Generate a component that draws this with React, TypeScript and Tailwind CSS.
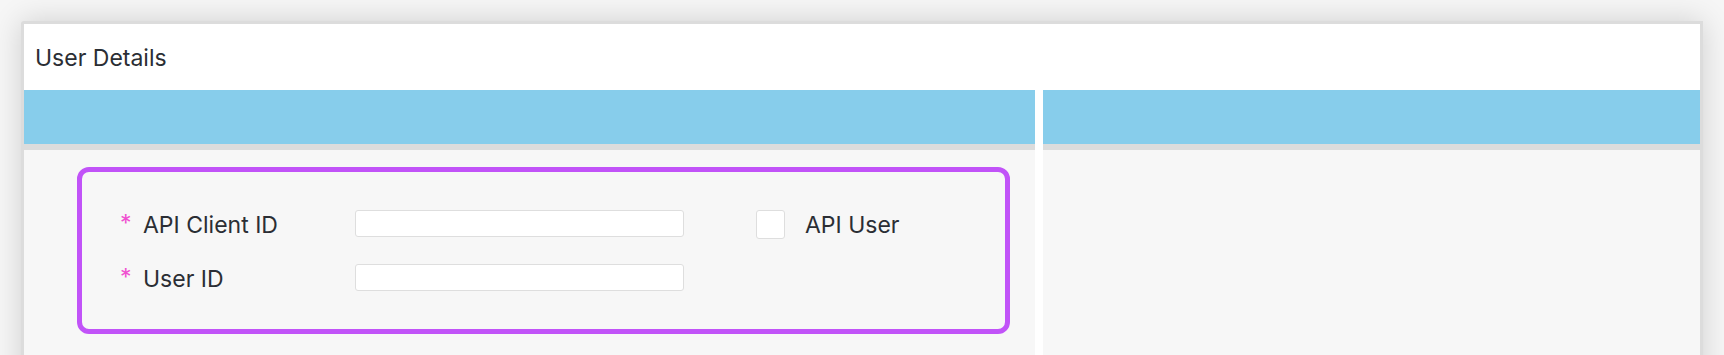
export default function App() {
  return (
    <div className="min-h-screen bg-[#f6f6f6] p-[21px] font-['Inter',sans-serif] text-[#2b2e34]">
      <div className="rounded-tl-[3px] border-[3px] border-[#dcdcdc] bg-white shadow-[0_0_30px_rgba(0,0,0,0.16)]">
        <div className="flex h-[66px] items-center px-[11px] pt-[3px] text-[23px] leading-[27px]">User Details</div>
        <div className="flex gap-2">
          <div className="w-[1011px]">
            <div className="h-[54px] bg-[#87cdeb]" />
            <div className="h-[6px] bg-[#dcdcdc]" />
            <div className="h-[300px] bg-[#f7f7f7] pl-[53px] pr-[25px] pt-[17px]">
              <div className="rounded-[12px] border-[5px] border-[#c153f8] px-[38px] py-[38px]">
                <div className="flex flex-col gap-[27px] text-[23px] leading-[27px]">
                  <div className="flex h-[27px] items-center">
                    <span className="w-[23px] self-start text-[#f050d0]">*</span>
                    <span className="mt-[4px] w-[212px]">API Client ID</span>
                    <input className="h-[27px] w-[329px] rounded-[3px] border border-[#dedede] bg-white" />
                    <span className="ml-[72px] mt-[2px] h-[29px] w-[29px] shrink-0 rounded-[3px] border border-[#dedede] bg-white" />
                    <span className="ml-[20px] mt-[4px]">API User</span>
                  </div>
                  <div className="flex h-[27px] items-center">
                    <span className="w-[23px] self-start text-[#f050d0]">*</span>
                    <span className="mt-[4px] w-[212px]">User ID</span>
                    <input className="h-[27px] w-[329px] rounded-[3px] border border-[#dedede] bg-white" />
                  </div>
                </div>
              </div>
            </div>
          </div>
          <div className="flex-1">
            <div className="h-[54px] bg-[#87cdeb]" />
            <div className="h-[6px] bg-[#dcdcdc]" />
            <div className="h-[300px] bg-[#f7f7f7]" />
          </div>
        </div>
      </div>
    </div>
  );
}
